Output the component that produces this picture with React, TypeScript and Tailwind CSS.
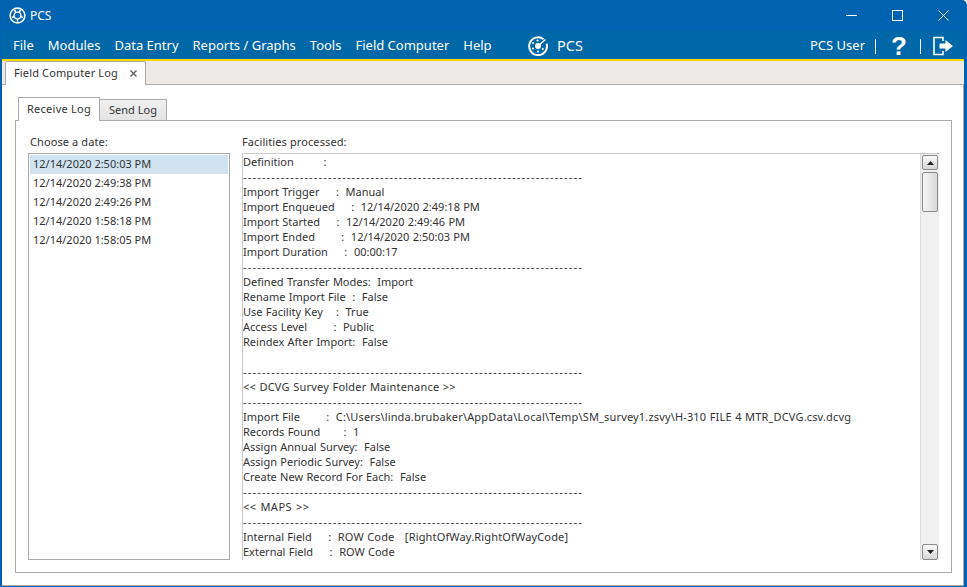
import React from 'react';

const menus = ['File', 'Modules', 'Data Entry', 'Reports / Graphs', 'Tools', 'Field Computer', 'Help'];
const dates = [
  '12/14/2020 2:50:03 PM',
  '12/14/2020 2:49:38 PM',
  '12/14/2020 2:49:26 PM',
  '12/14/2020 1:58:18 PM',
  '12/14/2020 1:58:05 PM',
];

const DASH = '-'.repeat(72);
const logLines: React.ReactNode[] = [
  'Definition         :',
  DASH,
  'Import Trigger     :  Manual',
  'Import Enqueued     :  12/14/2020 2:49:18 PM',
  'Import Started     :  12/14/2020 2:49:46 PM',
  'Import Ended        :  12/14/2020 2:50:03 PM',
  'Import Duration     :  00:00:17',
  DASH,
  'Defined Transfer Modes:  Import',
  'Rename Import File  :  False',
  'Use Facility Key    :  True',
  'Access Level        :  Public',
  'Reindex After Import:  False',
  ' ',
  DASH,
  <span className="tracking-[0.2px]">{'<< DCVG Survey Folder Maintenance >>'}</span>,
  DASH,
  <>Import File        :  <span className="tracking-[0.16px]">{'C:\\Users\\linda.brubaker\\AppData\\Local\\Temp\\SM_survey1.zsvy\\H-310 FILE 4 MTR_DCVG.csv.dcvg'}</span></>,
  'Records Found       :  1',
  'Assign Annual Survey:  False',
  'Assign Periodic Survey:  False',
  'Create New Record For Each:  False',
  DASH,
  <span className="tracking-[0.5px]">{'<< MAPS >>'}</span>,
  DASH,
  <>Internal Field     :  <span className="tracking-[0.16px]">ROW Code   [RightOfWay.RightOfWayCode]</span></>,
  'External Field     :  ROW Code',
];

// title bar icon, ring with spokes
const TitleLogo = () => (
  <svg width="17" height="17" viewBox="0 0 17 17" fill="none" stroke="white">
    <circle cx="8.5" cy="8.5" r="7.4" strokeWidth="1.6" />
    <circle cx="8.5" cy="8.5" r="3.4" strokeWidth="1.4" />
    <path d="M5.5 3L7 5.5M11.5 3L10 5.5M3 10.5L5.5 9.5M14 10.5L11.5 9.5M8.5 12V14.5" strokeWidth="1.5" />
  </svg>
);

// menu bar icon, broken ring with a dot and a sweep line
const RadarLogo = () => (
  <svg width="20" height="20" viewBox="0 0 20 20" fill="none" stroke="white">
    <path d="M15.6 3.2A8.9 8.9 0 1 0 18.6 7.6" strokeWidth="2" />
    <circle cx="10" cy="10" r="3" fill="white" stroke="none" />
    <path d="M11 9L17.5 3.5" strokeWidth="1.4" />
    <circle cx="5" cy="7" r="1.1" fill="white" stroke="none" />
    <circle cx="5" cy="12.5" r="1.1" fill="white" stroke="none" />
    <circle cx="10" cy="15.5" r="1.1" fill="white" stroke="none" />
    <circle cx="14.8" cy="13" r="1.1" fill="white" stroke="none" />
    <circle cx="9.5" cy="4.5" r="1.1" fill="white" stroke="none" />
  </svg>
);

const App = () => {
  return (
    <div className="h-[587px] w-[967px] overflow-hidden bg-white font-['Noto_Sans',sans-serif] text-[11px] text-[#333333]">
      <div className="flex h-full flex-col rounded-tr-[5px] border-r-[3px] border-b border-l-2 border-[#0063b1] bg-[#0063b1]">
        {/* Title bar */}
        <div className="flex h-[31px] shrink-0 items-center text-white">
          <span className="ml-[7px]"><TitleLogo /></span>
          <span className="ml-[4px] text-[12px]">PCS</span>
          <div className="ml-auto mr-[6px] flex items-center gap-[16px]">
            <div className="flex w-[30px] justify-center">
              <svg width="11" height="11" viewBox="0 0 11 11" stroke="white"><path d="M0 5.5H11" /></svg>
            </div>
            <div className="flex w-[30px] justify-center">
              <svg width="11" height="11" viewBox="0 0 11 11" fill="none" stroke="white"><rect x="0.5" y="0.5" width="10" height="10" /></svg>
            </div>
            <div className="flex w-[30px] justify-center">
              <svg width="11" height="11" viewBox="0 0 11 11" stroke="white"><path d="M0.5 0.5L10.5 10.5M10.5 0.5L0.5 10.5" /></svg>
            </div>
          </div>
        </div>

        {/* Menu bar */}
        <div className="flex h-[28px] shrink-0 items-center bg-[#0067a9] pt-[2px] text-[13px] text-white">
          <div className="flex w-[526px] shrink-0 gap-[14px] pl-[11px]">
            {menus.map(m => <span key={m}>{m}</span>)}
          </div>
          <RadarLogo />
          <span className="ml-[9px] text-[14.5px]">PCS</span>
          <div className="ml-auto flex items-center pr-[11px]">
            <span className="text-[13px]">PCS User</span>
            <span className="ml-[10px] h-[15px] w-px bg-white" />
            <span className="ml-[15px] w-[14px] text-center font-['Liberation_Sans',sans-serif] text-[26px] leading-none font-bold">?</span>
            <span className="ml-[15px] h-[15px] w-px bg-white" />
            <svg className="ml-[12px]" width="20" height="20" viewBox="0 0 20 20" fill="none" stroke="white" strokeWidth="1.6">
              <path d="M10 5V1.5H1V18.5H10V15" />
              <path d="M6.5 7.5H12.5V4L20 10L12.5 16V12.5H6.5Z" fill="white" stroke="none" />
            </svg>
          </div>
        </div>

        <div className="h-[2px] shrink-0 bg-[#f7d900]" />

        {/* Document tab strip */}
        <div className="flex h-[24px] shrink-0 items-end border-b border-[#aaaaaa] bg-[#ece9e7] pl-[3px]">
          <div className="-mb-px flex h-[24px] w-[141px] items-center rounded-t-[2px] border border-b-0 border-[#aaaaaa] bg-white pl-[8px]">
            <span className="tracking-[0.14px]">Field Computer Log</span>
            <svg className="ml-[12px]" width="7" height="7" viewBox="0 0 7 7" stroke="#666666" strokeWidth="1.5"><path d="M0.5 0.5L6.5 6.5M6.5 0.5L0.5 6.5" /></svg>
          </div>
        </div>

        {/* Body */}
        <div className="flex min-h-0 flex-1 flex-col border-r border-b border-[#aaaaaa] bg-white pt-[12px] pr-[11px] pb-[12px] pl-[13px]">
          <div className="flex h-[23px] shrink-0 items-end pl-[3px]">
            <div className="z-10 -mb-px flex h-[24px] w-[82px] items-center justify-center border border-b-0 border-[#aaaaaa] bg-white tracking-[0.25px]">Receive Log</div>
            <div className="flex h-[21px] w-[67px] items-center justify-center border border-b-0 border-l-0 border-[#aaaaaa] bg-gradient-to-b from-[#f0f0f0] to-[#e4e4e4]">Send Log</div>
          </div>

          <div className="flex min-h-0 flex-1 gap-[12px] border border-[#aaaaaa] px-[12px] pb-[12px]">
            <div className="flex w-[202px] shrink-0 flex-col">
              <div className="h-[32px] shrink-0 pt-[13px] pl-[2px] leading-[15px] tracking-[0.1px]">Choose a date:</div>
              <div className="min-h-0 flex-1 border border-[#aaaaaa] p-px">
                {dates.map((d, i) => (
                  <div key={d} className={`flex h-[19px] items-center pl-[3px] ${i === 0 ? 'bg-[#cfe3f3]' : ''}`}>{d}</div>
                ))}
              </div>
            </div>

            <div className="flex min-w-0 flex-1 flex-col">
              <div className="h-[32px] shrink-0 pt-[13px] leading-[15px] tracking-[0.1px]">Facilities processed:</div>
              <div className="flex min-h-0 flex-1 border-t border-l border-[#cccccc]">
                <div className="min-w-0 flex-1 overflow-hidden leading-[15px] whitespace-pre [word-spacing:0.44px]">
                  {logLines.map((line, i) => (
                    <div key={i} className={`h-[15px] ${line === DASH ? 'tracking-[1.18px]' : ''}`}>{line}</div>
                  ))}
                </div>
                <div className="flex w-[19px] shrink-0 flex-col border-l border-[#dddddd] bg-[#f0f0f0] pt-px pr-px pl-px">
                  <div className="flex h-[15px] shrink-0 items-center justify-center rounded-[2px] border border-[#8a8a8a] bg-gradient-to-b from-[#fafafa] to-[#d6d6d6]">
                    <svg width="7" height="4" viewBox="0 0 7 4" fill="#222"><path d="M3.5 0L7 4H0Z" /></svg>
                  </div>
                  <div className="mt-[2px] h-[40px] shrink-0 rounded-[2px] border border-[#8a8a8a] bg-gradient-to-r from-[#f6f6f6] to-[#d8d8d8]" />
                  <div className="mt-auto flex h-[16px] shrink-0 items-center justify-center rounded-[2px] border border-[#8a8a8a] bg-gradient-to-b from-[#fafafa] to-[#d6d6d6]">
                    <svg width="7" height="4" viewBox="0 0 7 4" fill="#222"><path d="M0 0H7L3.5 4Z" /></svg>
                  </div>
                </div>
              </div>
            </div>
          </div>
        </div>
      </div>
    </div>
  );
};

export default App;
